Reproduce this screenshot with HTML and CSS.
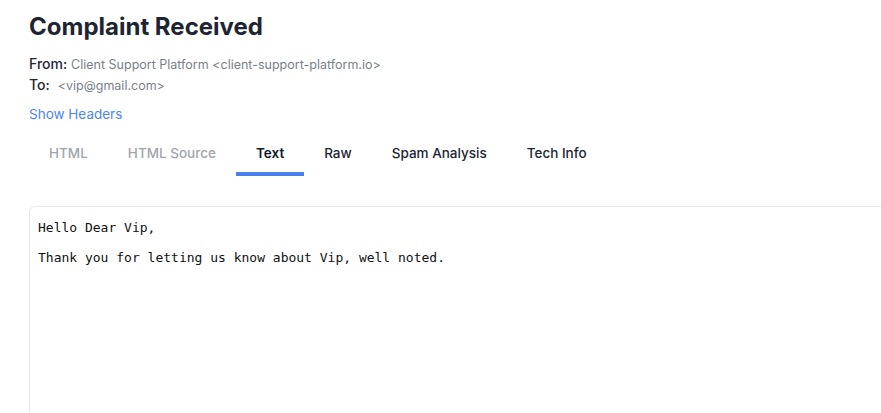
FILE: index.html
```html
<!DOCTYPE html>
<html>
<head>
<meta charset="utf-8">
<link rel="stylesheet" href="styles.css">
</head>
<body>
<div class="page">
  <h1 class="title">Complaint Received</h1>
  <div class="meta">
    <div class="meta-row"><span class="label">From:</span> <span class="value">Client Support Platform &lt;client-support-platform.io&gt;</span></div>
    <div class="meta-row"><span class="label">To:</span> <span class="value to">&lt;vip@gmail.com&gt;</span></div>
  </div>
  <a class="show-headers" href="#">Show Headers</a>
  <nav class="tabs">
    <span class="tab muted">HTML</span>
    <span class="tab muted">HTML Source</span>
    <span class="tab active">Text</span>
    <span class="tab">Raw</span>
    <span class="tab">Spam Analysis</span>
    <span class="tab">Tech Info</span>
  </nav>
  <div class="body-box"><pre class="body-text">Hello Dear Vip,

Thank you for letting us know about Vip, well noted.</pre></div>
</div>
</body>
</html>
```
FILE: styles.css
```css
html, body {
  margin: 0;
  padding: 0;
  background: #ffffff;
}
body {
  font-family: Inter, "Noto Sans", sans-serif;
  color: #1f2937;
  overflow: hidden;
  height: 413px;
}
.page {
  display: flex;
  flex-direction: column;
  align-items: flex-start;
  box-sizing: border-box;
  height: 413px;
  padding: 12px 0 0 29px;
}
.title {
  margin: 0;
  font-size: 24px;
  font-weight: 700;
  line-height: 30px;
  color: #1e2532;
}
.meta {
  margin-top: 12px;
  font-size: 14px;
  line-height: 20px;
}
.label {
  color: #1e2532;
  font-weight: 500;
}
.value {
  color: #7a7f87;
  font-size: 12.5px;
}
.value.to {
  margin-left: 4px;
}
.show-headers {
  display: inline-block;
  margin-top: 9px;
  font-size: 13.5px;
  line-height: 18px;
  color: #4f86f0;
  text-decoration: none;
}
.tabs {
  display: flex;
  margin-top: 9px;
}
.tab {
  padding: 12px 20px 10px;
  font-size: 13.5px;
  font-weight: 500;
  line-height: 18px;
  color: #1e2532;
  border-bottom: 4px solid transparent;
}
.tab.muted {
  color: #a0a4ab;
}
.tab.active {
  font-weight: 600;
  color: #111827;
  border-bottom-color: #4a80ee;
  border-radius: 3px 3px 0 0;
}
.body-box {
  flex: 1;
  align-self: stretch;
  margin-top: 30px;
  border: 1px solid #e8e9eb;
  border-right: none;
  border-bottom: none;
  border-radius: 6px 0 0 0;
  padding: 13px 8px 0;
}
.body-text {
  margin: 0;
  font-family: "DejaVu Sans Mono", monospace;
  font-size: 13px;
  line-height: 15px;
  color: #111111;
}
```
